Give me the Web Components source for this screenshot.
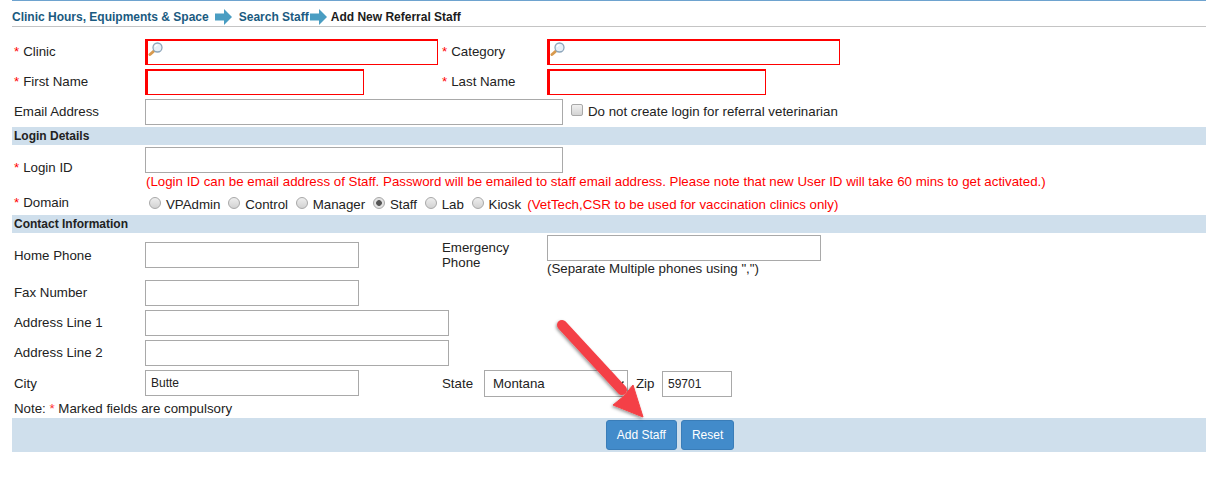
<!DOCTYPE html>
<html>
  <head>
    <meta charset="utf-8" />
    <title>Add New Referral Staff</title>
    <style>
      html, body { margin: 0; padding: 0; background: #fff; }
      body { font: 13.3px "Liberation Sans", Arial, sans-serif; color: #222; }
    </style>
  </head>
  <body>
    <staff-page>
      <bread-crumbs></bread-crumbs>

      <form-row top="12">
        <req-label slot="a" required>Clinic</req-label>
        <text-box slot="b" width="293" invalid lookup></text-box>
        <req-label slot="c" required>Category</req-label>
        <text-box slot="d" width="293" invalid lookup></text-box>
      </form-row>
      <form-row top="4">
        <req-label slot="a" required>First Name</req-label>
        <text-box slot="b" width="219" invalid></text-box>
        <req-label slot="c" required>Last Name</req-label>
        <text-box slot="d" width="219" invalid></text-box>
      </form-row>
      <form-row top="4" wide>
        <req-label slot="a">Email Address</req-label>
        <text-box slot="b" width="418"></text-box>
        <tick-box slot="c">Do not create login for referral veterinarian</tick-box>
      </form-row>

      <section-band top="2">Login Details</section-band>

      <form-row top="2" wide style="align-items:start">
        <req-label slot="a" required style="margin:13px 0 -9px">Login ID</req-label>
        <text-box slot="b" width="418"></text-box>
      </form-row>
      <form-row top="1" wide>
        <hint-text slot="b" red>(Login ID can be email address of Staff. Password will be emailed to staff email address. Please note that new User ID will take 60 mins to get activated.)</hint-text>
      </form-row>
      <form-row top="5" wide>
        <req-label slot="a" required style="margin-top:-2px">Domain</req-label>
        <domain-radios slot="b"></domain-radios>
      </form-row>

      <section-band top="1">Contact Information</section-band>

      <form-row top="2" tall>
        <req-label slot="a" style="margin-top:13px">Home Phone</req-label>
        <text-box slot="b" width="214" style="margin-top:7px"></text-box>
        <req-label slot="c" style="margin-top:5px"><span style="display:block;line-height:15px">Emergency<br />Phone</span></req-label>
        <div slot="d">
          <text-box width="274"></text-box>
          <hint-text style="padding-left:0">(Separate Multiple phones using ",")</hint-text>
        </div>
      </form-row>
      <form-row top="3">
        <req-label slot="a">Fax Number</req-label>
        <text-box slot="b" width="214"></text-box>
      </form-row>
      <form-row top="4">
        <req-label slot="a">Address Line 1</req-label>
        <text-box slot="b" width="304"></text-box>
      </form-row>
      <form-row top="4">
        <req-label slot="a">Address Line 2</req-label>
        <text-box slot="b" width="304"></text-box>
      </form-row>
      <form-row top="4" style="align-items:start">
        <req-label slot="a" style="margin-top:6px">City</req-label>
        <text-box slot="b" width="214" value="Butte"></text-box>
        <state-zip slot="c"></state-zip>
      </form-row>

      <form-note>Note: <span style="color:#f33">*</span> Marked fields are compulsory</form-note>
      <button-bar>
        <blue-button>Add Staff</blue-button>
        <blue-button>Reset</blue-button>
      </button-bar>

      <red-arrow></red-arrow>
    </staff-page>

    <script>
      class StaffPage extends HTMLElement {
        constructor() {
          super();
          this.attachShadow({ mode: "open" }).innerHTML = `
            <style>
              :host { display: block; position: relative; width: 1206px; height: 484px; box-sizing: border-box; padding-left: 12px; overflow: hidden; }
            </style>
            <slot></slot>`;
        }
      }

      class BreadCrumbs extends HTMLElement {
        constructor() {
          super();
          const arrow = `<svg width="17" height="16" viewBox="0 0 17 16"><path d="M0 4.500h9V0l8 8-8 8v-4.500H0z" fill="#4a9dc2"/></svg>`;
          this.attachShadow({ mode: "open" }).innerHTML = `
            <style>
              :host { display: flex; align-items: center; box-sizing: content-box; height: 19px; padding-top: 6px; border-top: 1px solid #6ea3cf; border-bottom: 1px solid #c4c4c4; font: bold 12px "Liberation Sans", Arial, sans-serif; color: #1a5a80; white-space: nowrap; }
              svg { display: block; flex: none; margin-top: 1px; }
              .a1 { margin-left: 6px; }
              .two { margin-left: 7px; }
              .a2 { margin-left: 1px; }
              .now { margin-left: 4px; color: #1b1b1b; }
            </style>
            <span class="one">Clinic Hours, Equipments &amp; Space</span>
            <span class="a1">${arrow}</span>
            <span class="two">Search Staff</span>
            <span class="a2">${arrow}</span>
            <span class="now">Add New Referral Staff</span>`;
        }
      }

      class FormRow extends HTMLElement {
        constructor() {
          super();
          this.attachShadow({ mode: "open" }).innerHTML = `
            <style>
              :host { display: grid; grid-template-columns: 133px 295px 107px 1fr; align-items: center; }
              :host([wide]) { grid-template-columns: 133px auto 1fr; }
              :host([wide]) .c { margin-left: 8px; }
              :host([wide]) .d { display: none; }
              :host([tall]) { align-items: start; height: 42px; }
            </style>
            <div class="a"><slot name="a"></slot></div>
            <div class="b"><slot name="b"></slot></div>
            <div class="c"><slot name="c"></slot></div>
            <div class="d"><slot name="d"></slot></div>`;
        }
        connectedCallback() {
          this.style.marginTop = (this.getAttribute("top") || 0) + "px";
        }
      }

      class ReqLabel extends HTMLElement {
        constructor() {
          super();
          this.attachShadow({ mode: "open" }).innerHTML = `
            <style>
              :host { display: block; padding: 0 0 2px 2px; color: #222; font-size: 13.3px; line-height: 15px; }
              b { font-weight: normal; color: #f00; margin-right: 4px; }
            </style>
            ${this.hasAttribute("required") ? "<b>*</b>" : ""}<slot></slot>`;
        }
      }

      class TextBox extends HTMLElement {
        constructor() {
          super();
          this.attachShadow({ mode: "open" }).innerHTML = `
            <style>
              :host { display: block; position: relative; }
              input { display: block; box-sizing: border-box; height: 26px; margin: 0; padding: 0 5px; border: 1px solid #a9a9a9; background: #fff; outline: 0; font: 12px "Liberation Sans", Arial, sans-serif; color: #222; }
              :host([invalid]) input { border: 1px solid #f00; border-left-width: 3px; border-top-width: 2px; }
              svg { position: absolute; left: 3px; top: 3px; }
            </style>
            <input type="text" />`;
          if (this.hasAttribute("lookup")) {
            this.shadowRoot.innerHTML += `
              <svg width="16" height="15" viewBox="0 0 16 15">
                <path d="M6.500 8.500 2 12.500" stroke="#d89a4e" stroke-width="3" stroke-linecap="round"/>
                <circle cx="9.500" cy="5.500" r="4.500" fill="#e6f0f8" stroke="#8ca5ba" stroke-width="1.300"/>
                <path d="M7 5a3 3 0 0 1 2.500-2.200" fill="none" stroke="#fff" stroke-width="1.200"/>
              </svg>`;
          }
        }
        connectedCallback() {
          const input = this.shadowRoot.querySelector("input");
          input.style.width = this.getAttribute("width") + "px";
          input.value = this.getAttribute("value") || "";
        }
      }

      class TickBox extends HTMLElement {
        constructor() {
          super();
          this.attachShadow({ mode: "open" }).innerHTML = `
            <style>
              :host { display: flex; align-items: center; padding-bottom: 2px; color: #222; font-size: 13.3px; }
              input { appearance: none; width: 12px; height: 12px; margin: -3px 5px 0 0; border: 1px solid #a8a8a8; border-radius: 2px; background: linear-gradient(#f0f0f0, #d4d4d4); }
            </style>
            <input type="checkbox" /><slot></slot>`;
        }
      }

      class SectionBand extends HTMLElement {
        constructor() {
          super();
          this.attachShadow({ mode: "open" }).innerHTML = `
            <style>
              :host { display: block; height: 18px; padding-left: 2px; background: #cfdfec; font: bold 12px/18px "Liberation Sans", Arial, sans-serif; color: #222; }
            </style>
            <slot></slot>`;
        }
        connectedCallback() {
          this.style.marginTop = (this.getAttribute("top") || 0) + "px";
        }
      }

      class HintText extends HTMLElement {
        constructor() {
          super();
          this.attachShadow({ mode: "open" }).innerHTML = `
            <style>
              :host { display: block; padding-left: 1px; line-height: 16px; font-size: 13.3px; white-space: nowrap; color: #222; }
              :host([red]) { color: #f00; }
            </style>
            <slot></slot>`;
        }
      }

      class DomainRadios extends HTMLElement {
        constructor() {
          super();
          const names = ["VPAdmin", "Control", "Manager", "Staff", "Lab", "Kiosk"];
          const items = names.map((n) => `<label><input type="radio" name="domain" ${n === "Staff" ? "checked" : ""} />${n}</label>`).join("");
          this.attachShadow({ mode: "open" }).innerHTML = `
            <style>
              :host { display: flex; align-items: center; padding: 1px 0 0 4px; font-size: 13.3px; line-height: 18px; color: #222; white-space: nowrap; }
              label { display: flex; align-items: center; margin-right: 7.700px; }
              input { appearance: none; flex: none; width: 12px; height: 12px; margin: -4px 5px 0 0; border: 1px solid #a8a8a8; border-radius: 50%; background: linear-gradient(#eee, #d2d2d2); }
              input:checked { background: radial-gradient(circle, #555 0 2.500px, #e2e2e2 3.200px); }
              span { color: #f00; margin-left: -1.500px; }
            </style>
            ${items}<span>(VetTech,CSR to be used for vaccination clinics only)</span>`;
        }
      }

      class StateZip extends HTMLElement {
        constructor() {
          super();
          this.attachShadow({ mode: "open" }).innerHTML = `
            <style>
              :host { display: flex; align-items: flex-start; width: 300px; margin-left: 2px; font-size: 13.3px; line-height: 27px; color: #222; white-space: nowrap; }
              .lab { flex: none; width: 42px; }
              .box { position: relative; }
              select { display: block; appearance: none; box-sizing: border-box; width: 144px; height: 27px; padding: 0 0 0 8px; border: 1px solid #a9a9a9; border-radius: 0; background: #fff; font: 13.3px "Liberation Sans", Arial, sans-serif; color: #222; }
              svg { position: absolute; right: 4px; top: 11px; }
              .zip { flex: none; width: 26px; margin-left: 8px; }
              input { box-sizing: border-box; width: 70px; height: 26px; margin: 1px 0 0; padding: 0 5px; border: 1px solid #a9a9a9; font: 12px "Liberation Sans", Arial, sans-serif; color: #222; }
            </style>
            <span class="lab">State</span>
            <div class="box">
              <select><option>Montana</option></select>
              <svg width="9" height="6" viewBox="0 0 9 6"><path d="M.5.5 4.500 5l4-4.500" fill="none" stroke="#333" stroke-width="1.500"/></svg>
            </div>
            <span class="zip">Zip</span>
            <input type="text" value="59701" />`;
        }
      }

      class FormNote extends HTMLElement {
        constructor() {
          super();
          this.attachShadow({ mode: "open" }).innerHTML = `
            <style>
              :host { display: block; height: 21px; line-height: 23px; padding-left: 2px; font-size: 13.3px; color: #222; }
            </style>
            <slot></slot>`;
        }
      }

      class ButtonBar extends HTMLElement {
        constructor() {
          super();
          this.attachShadow({ mode: "open" }).innerHTML = `
            <style>
              :host { display: flex; justify-content: center; align-items: center; gap: 4px; height: 34px; padding-left: 122px; background: #cfdfec; }
            </style>
            <slot></slot>`;
        }
      }

      class BlueButton extends HTMLElement {
        constructor() {
          super();
          this.attachShadow({ mode: "open" }).innerHTML = `
            <style>
              :host { display: block; }
              button { display: block; height: 30px; padding: 0 10px; border: 1px solid #3a7db8; border-radius: 3px; background: #428bca; color: #fff; font: 12px "Liberation Sans", Arial, sans-serif; }
            </style>
            <button type="button"><slot></slot></button>`;
        }
      }

      class RedArrow extends HTMLElement {
        constructor() {
          super();
          this.attachShadow({ mode: "open" }).innerHTML = `
            <style>
              :host { position: absolute; left: 540px; top: 310px; width: 120px; height: 120px; pointer-events: none; }
            </style>
            <svg width="120" height="120" viewBox="0 0 120 120">
              <defs><filter id="s" x="-20%" y="-20%" width="140%" height="140%"><feDropShadow dx="-1" dy="1.500" stdDeviation="1.500" flood-color="#000" flood-opacity=".4"/></filter></defs>
              <g filter="url(#s)">
                <path d="M22 15 82 80" stroke="#f44146" stroke-width="10" stroke-linecap="round"/>
                <path d="M103 107 73 95 84 86 93 75z" fill="#f44146" stroke="#f44146" stroke-width="1" stroke-linejoin="round"/>
              </g>
            </svg>`;
        }
      }

      customElements.define("staff-page", StaffPage);
      customElements.define("bread-crumbs", BreadCrumbs);
      customElements.define("form-row", FormRow);
      customElements.define("req-label", ReqLabel);
      customElements.define("text-box", TextBox);
      customElements.define("tick-box", TickBox);
      customElements.define("section-band", SectionBand);
      customElements.define("hint-text", HintText);
      customElements.define("domain-radios", DomainRadios);
      customElements.define("state-zip", StateZip);
      customElements.define("form-note", FormNote);
      customElements.define("button-bar", ButtonBar);
      customElements.define("blue-button", BlueButton);
      customElements.define("red-arrow", RedArrow);
    </script>
  </body>
</html>
